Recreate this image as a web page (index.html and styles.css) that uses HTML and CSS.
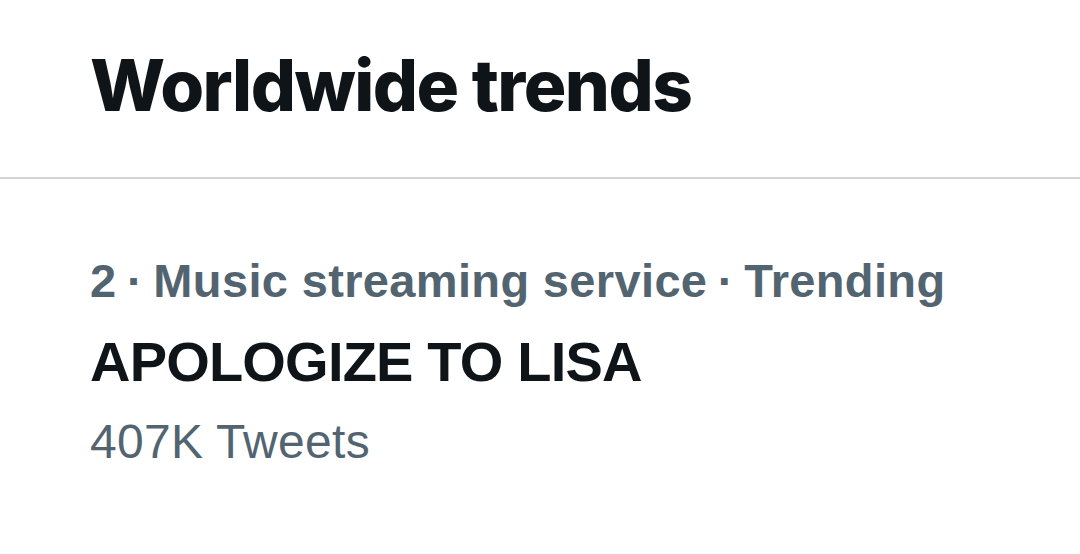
FILE: index.html
```html
<!DOCTYPE html>
<html>
<head>
<meta charset="utf-8">
<link rel="stylesheet" href="styles.css">
</head>
<body>
<div class="panel">
  <header class="header">
    <h1 class="title">Worldwide trends</h1>
  </header>
  <div class="trend">
    <div class="meta">2<span class="sep"> · </span>Music streaming service<span class="sep"> · </span>Trending</div>
    <div class="name">APOLOGIZE TO LISA</div>
    <div class="count">407K Tweets</div>
  </div>
</div>
</body>
</html>
```

FILE: styles.css
```css
html, body {
  margin: 0;
  padding: 0;
  background: #ffffff;
}
.panel {
  width: 1080px;
  height: 554px;
  font-family: "Liberation Sans", Arial, sans-serif;
  color: #0f1419;
}
.header {
  height: 177px;
  border-bottom: 2px solid #d4d4d4;
  padding-left: 90px;
  display: flex;
  align-items: flex-start;
  box-sizing: content-box;
}
.title {
  margin: 0;
  padding-top: 45px;
  font-family: Inter, "Liberation Sans", sans-serif;
  font-weight: 800;
  font-size: 71px;
  line-height: 80px;
  letter-spacing: -1.5px;
  color: #0f1419;
}
.trend {
  padding-left: 90px;
  padding-top: 74px;
  display: flex;
  flex-direction: column;
}
.meta {
  font-size: 47px;
  line-height: 56px;
  font-weight: 700;
  letter-spacing: 0.35px;
  color: #536471;
}
.sep {
  word-spacing: -3px;
}
.name {
  margin-top: 25px;
  font-size: 56px;
  line-height: 56px;
  font-weight: 700;
  letter-spacing: -0.8px;
  color: #0f1419;
}
.count {
  margin-top: 24px;
  font-size: 48px;
  line-height: 56px;
  font-weight: 400;
  letter-spacing: 0.3px;
  color: #536471;
}
```
